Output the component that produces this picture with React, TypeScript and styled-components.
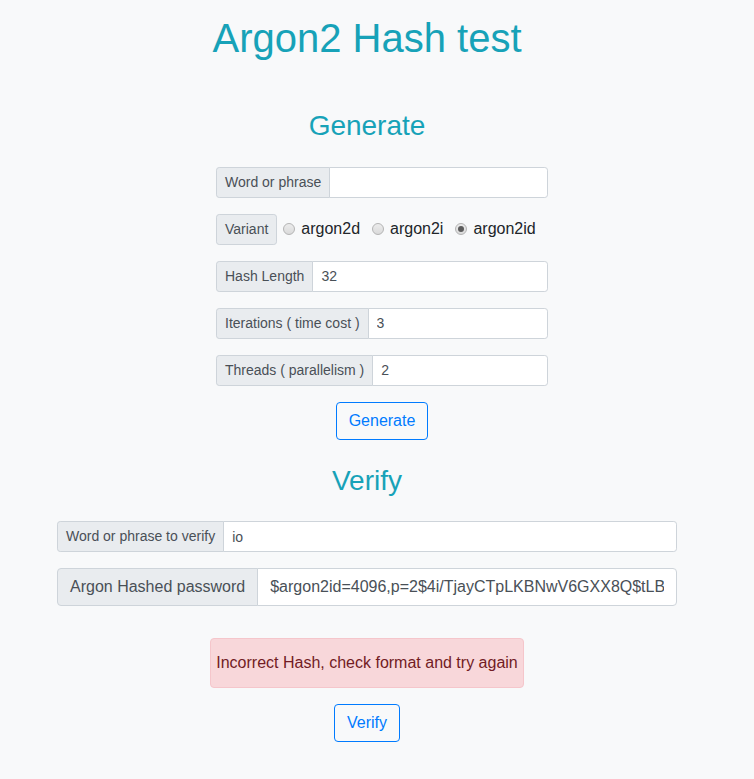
import React from "react";
import styled, { createGlobalStyle, css } from "styled-components";

const GlobalStyle = createGlobalStyle`
  html, body {
    margin: 0;
    padding: 0;
    background: #f8f9fa;
  }
  body {
    font-family: "Liberation Sans", Arial, sans-serif;
    font-size: 16px;
    line-height: 1.5;
    color: #212529;
  }
  * { box-sizing: border-box; }
`;

const Page = styled.div`
  width: 734px;
  min-height: 779px;
  text-align: center;
`;

const Title = styled.h1`
  margin: 14px 0 0;
  font-size: 40px;
  font-weight: 400;
  line-height: 48px;
  color: #17a2b8;
`;

const SectionTitle = styled.h3<{ $top: number; $bottom: number }>`
  margin: ${(p) => p.$top}px 0 ${(p) => p.$bottom}px;
  font-size: 28px;
  font-weight: 400;
  line-height: 33.6px;
  color: #17a2b8;
`;

const GenerateForm = styled.div`
  width: 362px;
  margin: 0 auto;
  padding-left: 30px;
  display: flex;
  flex-direction: column;
  gap: 16px;
  text-align: left;
`;

const VerifyForm = styled.div`
  width: 620px;
  margin: 0 auto;
  display: flex;
  flex-direction: column;
  gap: 16px;
  text-align: left;
`;

const Group = styled.div`
  display: flex;
  align-items: stretch;
  width: 100%;
`;

const AddonText = styled.span<{ $lg?: boolean }>`
  display: flex;
  align-items: center;
  white-space: nowrap;
  background: #e9ecef;
  border: 1px solid #ced4da;
  color: #495057;
  ${(p) =>
    p.$lg
      ? css`
          font-size: 16px;
          line-height: 24px;
          padding: 6px 12px;
          border-radius: 4px 0 0 4px;
        `
      : css`
          font-size: 14px;
          line-height: 21px;
          padding: 4px 8px;
          border-radius: 3.2px 0 0 3.2px;
        `}
`;

const VariantLabel = styled(AddonText)`
  border-radius: 3.2px;
`;

const TextInput = styled.input<{ $lg?: boolean }>`
  flex: 1;
  min-width: 0;
  margin: 0;
  margin-left: -1px;
  background: #fff;
  border: 1px solid #ced4da;
  color: #495057;
  font-family: "Liberation Sans", Arial, sans-serif;
  outline: none;
  ${(p) =>
    p.$lg
      ? css`
          font-size: 16px;
          line-height: 24px;
          height: 38px;
          padding: 6px 12px;
          border-radius: 0 4px 4px 0;
        `
      : css`
          font-size: 14px;
          line-height: 21px;
          height: 31px;
          padding: 4px 8px;
          border-radius: 0 3.2px 3.2px 0;
        `}
`;

const RadioRow = styled.div`
  display: flex;
  align-items: center;
  height: 31px;
`;

const RadioOption = styled.label`
  display: inline-flex;
  align-items: center;
  font-size: 16px;
  line-height: 24px;
  color: #212529;
  margin-right: 6px;
`;

const Radio = styled.input`
  appearance: none;
  -webkit-appearance: none;
  width: 12px;
  height: 12px;
  margin: 0 6px 0 6px;
  border-radius: 50%;
  border: 1px solid #b4b4b4;
  background: linear-gradient(#ececec, #dadada);
  display: inline-grid;
  place-items: center;
  &:checked::after {
    content: "";
    width: 6px;
    height: 6px;
    border-radius: 50%;
    background: #5c5c5c;
  }
`;

const Center = styled.div<{ $top: number }>`
  margin-top: ${(p) => p.$top}px;
  display: flex;
  justify-content: center;
`;

const OutlineButton = styled.button`
  font-family: "Liberation Sans", Arial, sans-serif;
  font-size: 16px;
  line-height: 24px;
  padding: 6px 12px;
  color: #007bff;
  background: transparent;
  border: 1px solid #007bff;
  border-radius: 4px;
  cursor: pointer;
`;

const Alert = styled.div`
  display: inline-block;
  padding: 12px 5px;
  font-size: 16px;
  line-height: 24px;
  color: #721c24;
  background: #f8d7da;
  border: 1px solid #f5c6cb;
  border-radius: 4px;
`;

const GenerateButtonWrap = styled.div`
  width: 362px;
  margin: 16px auto 0;
  padding-left: 30px;
  display: flex;
  justify-content: center;
`;

export default function App() {
  return (
    <>
      <GlobalStyle />
      <Page>
        <Title>Argon2 Hash test</Title>
        <SectionTitle $top={47} $bottom={24}>Generate</SectionTitle>
        <GenerateForm>
          <Group>
            <AddonText>Word or phrase</AddonText>
            <TextInput type="text" defaultValue="" />
          </Group>
          <RadioRow>
            <VariantLabel>Variant</VariantLabel>
            <RadioOption>
              <Radio type="radio" name="variant" />
              argon2d
            </RadioOption>
            <RadioOption>
              <Radio type="radio" name="variant" />
              argon2i
            </RadioOption>
            <RadioOption>
              <Radio type="radio" name="variant" defaultChecked />
              argon2id
            </RadioOption>
          </RadioRow>
          <Group>
            <AddonText>Hash Length</AddonText>
            <TextInput type="text" defaultValue="32" />
          </Group>
          <Group>
            <AddonText>Iterations ( time cost )</AddonText>
            <TextInput type="text" defaultValue="3" />
          </Group>
          <Group>
            <AddonText>Threads ( parallelism )</AddonText>
            <TextInput type="text" defaultValue="2" />
          </Group>
        </GenerateForm>
        <GenerateButtonWrap>
          <OutlineButton>Generate</OutlineButton>
        </GenerateButtonWrap>
        <SectionTitle $top={24} $bottom={24}>Verify</SectionTitle>
        <VerifyForm>
          <Group>
            <AddonText>Word or phrase to verify</AddonText>
            <TextInput type="text" defaultValue="io" />
          </Group>
          <Group>
            <AddonText $lg>Argon Hashed password</AddonText>
            <TextInput $lg type="text" defaultValue="$argon2id=4096,p=2$4i/TjayCTpLKBNwV6GXX8Q$tLB" />
          </Group>
        </VerifyForm>
        <Center $top={32}>
          <Alert>Incorrect Hash, check format and try again</Alert>
        </Center>
        <Center $top={16}>
          <OutlineButton>Verify</OutlineButton>
        </Center>
      </Page>
    </>
  );
}
